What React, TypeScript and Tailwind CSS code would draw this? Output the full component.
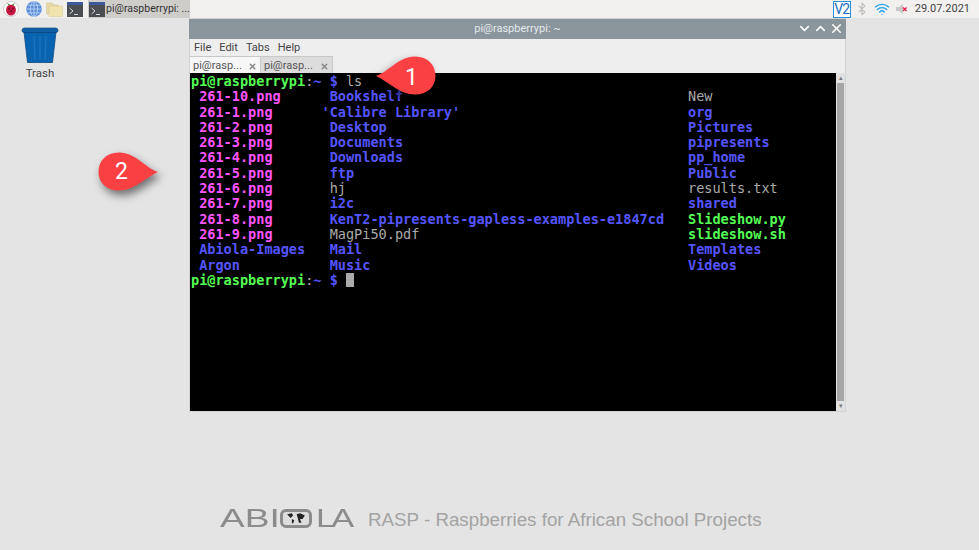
import { Bluetooth, Wifi, X, ChevronDown, ChevronUp } from 'lucide-react';

const M = 'text-[#ff55ff] font-bold';
const B = 'text-[#5555ff] font-bold';
const G = 'text-[#55ff55] font-bold';
const N = 'text-[#aaaaaa]';

const rows: [string, string, string, string, string, string][] = [
    ['261-10.png', M, ' Bookshelf', B, 'New', N],
    ['261-1.png', M, "'Calibre Library'", B, 'org', B],
    ['261-2.png', M, ' Desktop', B, 'Pictures', B],
    ['261-3.png', M, ' Documents', B, 'pipresents', B],
    ['261-4.png', M, ' Downloads', B, 'pp_home', B],
    ['261-5.png', M, ' ftp', B, 'Public', B],
    ['261-6.png', M, ' hj', N, 'results.txt', N],
    ['261-7.png', M, ' i2c', B, 'shared', B],
    ['261-8.png', M, ' KenT2-pipresents-gapless-examples-e1847cd', B, 'Slideshow.py', G],
    ['261-9.png', M, ' MagPi50.pdf', N, 'slideshow.sh', G],
    ['Abiola-Images', B, ' Mail', B, 'Templates', B],
    ['Argon', B, ' Music', B, 'Videos', B],
];

function Prompt({ children }: { children?: React.ReactNode }) {
    return (
        <div className="h-[15.3px] whitespace-pre">
            <span className="text-[#55ff55] font-bold">pi@raspberrypi</span>
            <span className="text-[#aaaaaa]">:</span>
            <span className="text-[#5555ff] font-bold">~</span>
            <span className="text-[#5555ff] font-bold"> $ </span>
            {children}
        </div>
    );
}

function Raspberry() {
    return (
        <div className="w-[16px] h-[16px] rounded-full bg-white border border-[#cfcfcf] flex items-center justify-center">
            <svg width="12" height="14" viewBox="0 0 11 13">
                <path d="M2 1 L5.5 3 L9 1 L8 3.5 L3 3.5Z" fill="#4a8f3a" />
                <ellipse cx="5.5" cy="7.5" rx="4.6" ry="5" fill="#c5163f" />
                <circle cx="3.7" cy="6.2" r="1" fill="#7d0a28" />
                <circle cx="7.2" cy="6.2" r="1" fill="#7d0a28" />
                <circle cx="5.5" cy="8.6" r="1" fill="#7d0a28" />
            </svg>
        </div>
    );
}

function Globe() {
    return (
        <svg width="16" height="16" viewBox="0 0 16 16">
            <circle cx="8" cy="8" r="7.8" fill="#5b8fd9" />
            <g fill="none" stroke="#c4d8f2" strokeWidth="0.8">
                <ellipse cx="8" cy="8" rx="3.6" ry="7.6" />
                <path d="M0.5 8H15.5M1.6 4.2H14.4M1.6 11.8H14.4M8 0.4V15.6" />
            </g>
        </svg>
    );
}

function Folder() {
    return (
        <svg width="17" height="15" viewBox="0 0 17 15">
            <path d="M0.5 1H6L7.5 3H12V12H0.5Z" fill="#e8d9a8" stroke="#cdbd88" strokeWidth="0.5" />
            <path d="M3 4H16.5V14.5H3Z" fill="#f2e4ae" stroke="#d6c68e" strokeWidth="0.5" />
        </svg>
    );
}

function TermIcon() {
    return (
        <div className="w-[16px] h-[15px] shrink-0 bg-[#4a4e52] flex flex-col">
            <div className="h-[3px] bg-[#3c5a9a] shrink-0" />
            <svg width="16" height="12" viewBox="0 0 16 12">
                <path d="M2.5 3L6 6L2.5 9" fill="none" stroke="#d8d8d8" strokeWidth="1" />
                <path d="M7 9.5H11" stroke="#d8d8d8" strokeWidth="1" />
            </svg>
        </div>
    );
}

function Trash() {
    return (
        <svg width="38" height="36" viewBox="0 0 38 36">
            <path d="M3 5H35L31.5 35.5H6.5Z" fill="#0a63b0" stroke="#0a4a85" strokeWidth="0.8" />
            <path d="M13 9L14 33M19 9V33M25 9L24 33" stroke="#2a7cc4" strokeWidth="0.8" />
            <path d="M1 3.5Q1 1 3 1H35Q37 1 37 3.5Q37 5.5 35 5.5H3Q1 5.5 1 3.5Z" fill="#0e5fa6" stroke="#0a3f73" strokeWidth="0.6" />
        </svg>
    );
}

function Bubble({ flip }: { flip?: boolean }) {
    return (
        <svg width="60" height="40" viewBox="0 0 60 40" className={flip ? '-scale-x-100 drop-shadow-[-3px_5px_4px_rgba(0,0,0,0.5)]' : 'drop-shadow-[-3px_5px_4px_rgba(0,0,0,0.5)]'}>
            <path d="M0 20 C14 15 22 1 39 0.5 C52 0.5 59.5 9 59.5 20 C59.5 31 51 38.5 39 38.5 C24 38.5 13 26 0 20Z" fill="#fb4044" />
        </svg>
    );
}

export default function App() {
    return (
        <div className="relative w-[979px] h-[550px] overflow-hidden bg-[#e4e4e4] font-['Roboto',sans-serif]">
            {/* Panel */}
            <div className="h-[18px] bg-[#f1f0ef] flex items-center pl-[3px]">
                <Raspberry />
                <div className="ml-[7px]"><Globe /></div>
                <div className="ml-[4px]"><Folder /></div>
                <div className="ml-[4px]"><TermIcon /></div>
                <div className="ml-[5px] h-[18px] w-[102px] bg-[#cfcdca] flex items-center pl-[1px] gap-[1px] text-[10.5px] text-[#333] whitespace-pre">
                    <TermIcon />
                    <span>pi@raspberrypi: ...</span>
                </div>
                <div className="ml-auto flex items-center h-[18px]">
                    <div className="w-[18px] h-[17px] border border-[#2a8fe0] bg-white text-[#1d6fc0] text-[14px] leading-[15px] text-center tracking-[-1px]">V2</div>
                    <Bluetooth size={14} className="ml-[4px] text-[#bdbdbd]" />
                    <Wifi size={16} className="ml-[5px] text-[#22a0e8]" />
                    <svg width="13" height="12" viewBox="0 0 12 12" className="ml-[5px]">
                        <path d="M0.5 4H3.5L7.5 1V11L3.5 8H0.5Z" fill="#c8c8c8" />
                        <path d="M7.5 4.5L11 8M11 4.5L7.5 8" stroke="#e8204a" strokeWidth="1.4" />
                    </svg>
                    <span className="ml-[7px] mr-[9px] text-[11px] text-[#444]">29.07.2021</span>
                </div>
            </div>

            {/* Desktop icon */}
            <div className="absolute left-[11px] top-[27px] w-[58px] flex flex-col items-center">
                <Trash />
                <span className="mt-[2px] text-[11.5px] text-[#444]">Trash</span>
            </div>

            {/* Terminal window */}
            <div className="absolute left-[189px] top-[18px] w-[657px] h-[394px] bg-[#eeeeee] border border-[#d2d2d2] flex flex-col">
                <div className="h-[20px] shrink-0 -mx-px bg-[#8a959c] relative flex items-center justify-center text-[11px] text-[#e6e9eb]">
                    pi@raspberrypi: ~
                    <div className="absolute right-[2px] top-[2px] flex gap-[1px] text-white">
                        <ChevronDown size={15} strokeWidth={2.5} />
                        <ChevronUp size={15} strokeWidth={2.5} />
                        <X size={15} strokeWidth={2.5} />
                    </div>
                </div>
                <div className="h-[17px] shrink-0 flex items-center gap-[8px] pl-[4px] pt-[1px] text-[11px] text-[#444]">
                    <span>File</span>
                    <span>Edit</span>
                    <span>Tabs</span>
                    <span>Help</span>
                </div>
                <div className="h-[17px] shrink-0 flex items-end text-[11px] text-[#555]">
                    <div className="h-[17px] w-[71px] bg-[#f7f7f7] border border-b-0 border-l-0 border-[#c8c8c8] flex items-center justify-between pl-[3px] pr-[3px] pt-[3px]">
                        <span>pi@rasp...</span>
                        <X size={9} strokeWidth={4} className="text-[#888]" />
                    </div>
                    <div className="h-[17px] w-[72px] bg-[#dcdcdc] border border-b-0 border-l-0 border-[#c8c8c8] flex items-center justify-between pl-[3px] pr-[3px] pt-[3px]">
                        <span>pi@rasp...</span>
                        <X size={9} strokeWidth={4} className="text-[#888]" />
                    </div>
                </div>
                <div className="flex-1 flex min-h-0">
                    <div className="w-[646px] shrink-0 bg-black pl-[1px] pt-[1px] font-['DejaVu_Sans_Mono',monospace] text-[13.55px] leading-[15.3px] text-[#aaaaaa]">
                        <Prompt><span className={N}>ls</span></Prompt>
                        {rows.map((r) => (
                            <div key={r[0]} className="h-[15.3px] flex whitespace-pre">
                                <span className={`w-[130.5px] pl-[8.15px] ${r[1]}`}>{r[0]}</span>
                                <span className={`w-[359px] ${r[3]}`}>{r[2]}</span>
                                <span className={`ml-[7.5px] ${r[5]}`}>{r[4]}</span>
                            </div>
                        ))}
                        <Prompt><span className="inline-block w-[8px] h-[14px] bg-[#aaaaaa] align-[-2px]" /></Prompt>
                    </div>
                    <div className="flex-1 bg-[#e2e2e2] flex flex-col items-center">
                        <div className="h-[10px] text-[#777] text-[7px] leading-[10px]">▴</div>
                        <div className="w-[7px] flex-1 bg-[#a6a6a6]" />
                        <div className="h-[10px] text-[#777] text-[7px] leading-[10px]">▾</div>
                    </div>
                </div>
            </div>

            {/* Callouts */}
            <div className="absolute left-[376px] top-[56px]">
                <Bubble />
                <span className="absolute left-[29px] top-[9px] text-[23px] leading-[26px] text-white">1</span>
            </div>
            <div className="absolute left-[98px] top-[152px]">
                <Bubble flip />
                <span className="absolute left-[17px] top-[7px] text-[23px] leading-[26px] text-white">2</span>
            </div>

            {/* Footer logo */}
            <div className="absolute left-[220px] top-[503px] flex items-center h-[30px] text-[#8c8c8c] font-['Liberation_Sans',sans-serif]">
                <span className="inline-block origin-left text-[26.5px] leading-[30px] scale-x-[1.4] w-[60px] whitespace-pre">ABI</span>
                <div className="w-[32px] h-[19px] rounded-[6px] border-[3px] border-[#8c8c8c] bg-[#ddd] flex items-center justify-center">
                    <svg width="22" height="13" viewBox="0 0 17 11">
                        <path d="M1 2L5 1L6 3L4 5L3 4ZM5 6L7 7L6 10L5 9ZM9 2L12 1L16 3L14 6L12 6L13 9L11 9L10 5Z" fill="#222" />
                    </svg>
                </div>
                <span className="inline-block origin-left text-[26.5px] leading-[30px] scale-x-[1.3] ml-[4px] tracking-[-3px] whitespace-pre">LA</span>
            </div>
            <div className="absolute left-[368px] top-[508px] text-[18.75px] leading-[24px] text-[#a3a3a3] whitespace-pre font-['Liberation_Sans',sans-serif]">
                RASP - Raspberries for African School Projects
            </div>
        </div>
    );
}
